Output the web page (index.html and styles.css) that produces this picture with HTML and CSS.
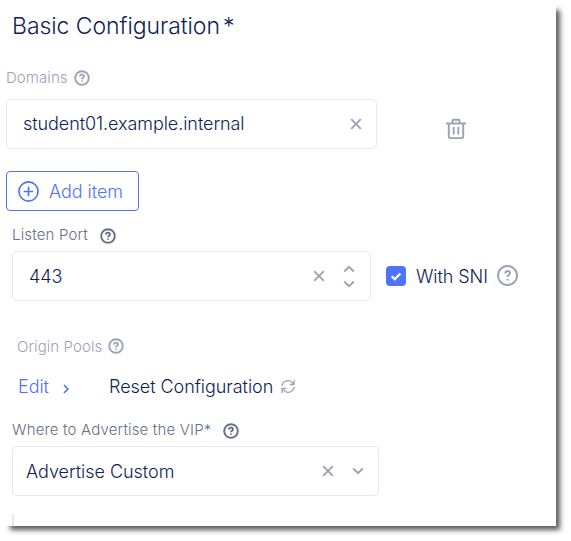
FILE: index.html
```html
<!DOCTYPE html>
<html lang="en">
<head>
<meta charset="utf-8">
<title>Basic Configuration</title>
<link rel="stylesheet" href="styles.css">
</head>
<body>
<svg class="defs" width="0" height="0" aria-hidden="true">
  <symbol id="help" viewBox="0 0 16 16"><circle cx="8" cy="8" r="6.8"/><path d="M6 6.500C6 5.300 6.800 4.600 8 4.600s2 .7 2 1.700c0 1.300-2 1.500-2 2.900M8 10.400v1.300"/></symbol>
  <symbol id="close" viewBox="0 0 12 12"><path d="M1.200 1.200l9.600 9.600M10.800 1.200l-9.600 9.600"/></symbol>
  <symbol id="down" viewBox="0 0 12 8"><path d="M1.200 1.500L6 6.200l4.800-4.700"/></symbol>
</svg>
<main class="panel">
  <h1 class="title"><span>Basic Configuration</span><span class="star">*</span></h1>

  <section class="domains">
    <div class="label muted"><span>Domains</span><svg class="icon help"><use href="#help"/></svg></div>
    <div class="row">
      <div class="field domain-field"><span class="value host">student01.example.internal</span><svg class="icon close"><use href="#close"/></svg></div>
      <svg class="icon trash" viewBox="0 0 20 22"><path d="M0 5.500h20M2.800 5.500v12.800q0 1.800 1.800 1.800h10.800q1.800 0 1.800-1.800V5.500M6.500 5V2.800q0-1 1-1h5q1 0 1 1V5M7.700 9v7.600M12.300 9v7.600"/></svg>
    </div>
    <button class="add"><svg class="icon plus" viewBox="0 0 20 20"><circle cx="10" cy="10" r="9.100"/><path d="M10 5.500v9M5.500 10h9"/></svg><span>Add item</span></button>
  </section>

  <section class="port">
    <div class="label"><span>Listen Port</span><svg class="icon help"><use href="#help"/></svg></div>
    <div class="row">
      <div class="field port-field"><span class="value">443</span><svg class="icon close"><use href="#close"/></svg><span class="stepper"><svg class="icon up"><use href="#down"/></svg><svg class="icon down"><use href="#down"/></svg></span></div>
      <span class="checkbox"><svg viewBox="0 0 20 20"><path d="M5.700 10.300l3 3 5.700-5.900"/></svg></span>
      <span>With SNI</span>
      <svg class="icon help-lg" viewBox="0 0 20 20"><circle cx="10" cy="10" r="9.100"/><path d="M7.900 8.200c0-1.600.9-2.500 2.200-2.500s2.200.9 2.200 2.100c0 1.700-2.200 1.900-2.200 3.700M10.100 13.100v1.600"/></svg>
    </div>
  </section>

  <section class="origin">
    <div class="label muted"><span>Origin Pools</span><svg class="icon help"><use href="#help"/></svg></div>
    <div class="actions">
      <a class="edit"><span>Edit</span><svg class="icon next" viewBox="0 0 6 10"><path d="M1 1l3.900 4L1 9"/></svg></a>
      <span>Reset Configuration</span>
      <svg class="icon refresh" viewBox="0 0 14 15"><path d="M1 7A6 6 0 0 1 11.800 4.200L13 5.500M13 1v4.500H8.700M13 8A6 6 0 0 1 2.200 10.800L1 9.500M1 14V9.500h4.300"/></svg>
    </div>
  </section>

  <section class="advertise">
    <div class="label"><span>Where to Advertise the VIP*</span><svg class="icon help"><use href="#help"/></svg></div>
    <div class="field advertise-field"><span class="value">Advertise Custom</span><svg class="icon close"><use href="#close"/></svg><svg class="icon down"><use href="#down"/></svg></div>
    <div class="nested"></div>
  </section>
</main>
</body>
</html>
```
FILE: styles.css
```css
* { box-sizing: border-box; }
body {
  margin: 0;
  min-height: 541px;
  background: #fff;
  font-family: Inter, "Liberation Sans", sans-serif;
  font-weight: 330;
  color: #0f1e57;
}
.defs { position: absolute; }
.panel {
  width: 556px;
  height: 526px;
  background: #fff;
  box-shadow: 7px 7px 5px -3px rgba(0, 0, 0, .64);
  overflow: hidden;
}
.icon {
  flex: none;
  fill: none;
  stroke: #9ca3b8;
  stroke-width: 1.9;
}
.title {
  display: flex;
  height: 68px;
  margin: 0;
  padding-left: 12px;
  font-size: 23px;
  line-height: 52px;
  font-weight: 330;
  letter-spacing: -.06px;
}
.star { margin-left: 3px; }
.label {
  display: flex;
  align-items: center;
  height: 20px;
  font-size: 15px;
  line-height: 20px;
  letter-spacing: .17px;
  color: #667085;
}
.label .help { width: 16px; height: 16px; stroke: #667085; }
.label.muted { color: #9ca3b8; letter-spacing: .08px; }
.label.muted .help { stroke: #9ca3b8; }
.row { display: flex; align-items: center; font-size: 18px; letter-spacing: -.07px; }
.field {
  display: flex;
  align-items: center;
  height: 50px;
  border: 1px solid #e5e7f4;
  border-radius: 5px;
  font-size: 18px;
}
.value { flex: 1; }
.close { width: 12px; height: 12px; }
.down, .up { width: 12px; height: 8px; }
.up { transform: rotate(180deg); }

.domains { padding-left: 6px; }
.domains .help { margin: -1px 0 0 6px; }
.domains .row { margin-top: 11px; }
.domain-field { width: 371px; padding: 0 14px 0 16px; }
.host { padding-bottom: 1px; }
.trash { width: 20px; height: 22px; margin: 9px 0 0 69px; }
.add {
  display: flex;
  align-items: center;
  width: 133px;
  height: 40px;
  margin-top: 22px;
  padding: 0 0 0 11px;
  border: 1px solid #4f73ff;
  border-radius: 4px;
  background: #fff;
  color: #4f73ff;
  font: inherit;
  font-size: 18px;
  letter-spacing: -.05px;
}
.plus { width: 21px; height: 21px; margin-right: 10px; stroke: #4f73ff; stroke-width: 1.6; }

.port { padding: 14px 0 0 12px; }
.port .label .help { margin: 1px 0 0 12px; }
.port .row { margin-top: 6px; }
.port-field { width: 359px; padding: 0 15px 0 16px; }
.stepper { display: flex; flex-direction: column; gap: 7px; margin-left: 18px; }
.checkbox { width: 20px; height: 20px; margin: 0 10px 0 15px; border-radius: 4px; background: #4f73ff; }
.checkbox svg { display: block; fill: none; stroke: #fff; stroke-width: 2.2; }
.help-lg { width: 21px; height: 21px; margin: -2px 0 0 9px; }

.origin { padding: 36px 0 0 17px; }
.origin .help { margin: -2px 0 0 6px; }
.actions { display: flex; align-items: center; height: 30px; margin-top: 14px; font-size: 18px; letter-spacing: -.05px; }
.edit { display: flex; align-items: center; width: 92px; padding-left: 1px; color: #4f73ff; }
.next { width: 6px; height: 10px; margin: 5px 0 0 14px; stroke: #4f73ff; stroke-width: 1.7; }
.refresh { width: 14px; height: 15px; margin-left: 8px; stroke-width: 1.3; }

.advertise { padding: 19px 0 0 12px; }
.advertise .help { margin: 1px 0 0 12px; }
.advertise-field { width: 367px; margin-top: 6px; padding: 0 14px 0 13px; letter-spacing: -.02px; }
.advertise-field .down { margin-left: 18px; }
.nested { width: 2px; height: 12px; margin-top: 18px; background: #e5e7f4; }
```
